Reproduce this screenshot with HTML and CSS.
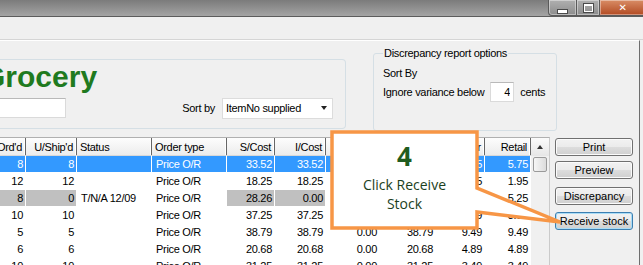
FILE: index.html
```html
<!DOCTYPE html>
<html lang="en">
<head>
  <meta charset="UTF-8">
  <title>Receive Stock</title>
  <link rel="stylesheet" href="styles.css">
</head>
<body>
<div class="titlebar">
  <div class="caption">
    <span class="cap cap-min"><i></i></span>
    <span class="cap cap-max"><i></i></span>
    <span class="cap cap-close">✕</span>
  </div>
</div>
<div class="toolbar"></div>

<div class="client">
  <div class="top">
    <div class="supplier">
      <div class="supplier-name">Grocery</div>
      <div class="supplier-row">
        <input class="textbox code" type="text">
        <span class="sort-label">Sort by</span>
        <div class="combo">ItemNo supplied<span class="combo-arrow"></span></div>
      </div>
    </div>

    <fieldset class="disc">
      <legend>Discrepancy report options</legend>
      <div class="disc-line">Sort By</div>
      <div class="disc-row">
        <span>Ignore variance below</span>
        <input class="textbox cents" type="text" value="4">
        <span>cents</span>
      </div>
    </fieldset>
  </div>

  <div class="bottom">
    <div class="grid">
      <div class="cols">
        <div class="row head">
          <div>Ord'd</div><div>U/Ship'd</div><div class="l">Status</div><div class="l">Order type</div>
          <div>S/Cost</div><div>I/Cost</div><div>Disc</div><div>Nett</div><div>Unit Pr</div><div>Retail</div>
        </div>
        <div class="row sel">
          <div>8</div><div>8</div><div class="l"></div><div class="l">Price O/R</div>
          <div>33.52</div><div>33.52</div><div>0.00</div><div>33.52</div><div>5.75</div><div>5.75</div>
        </div>
        <div class="row">
          <div>12</div><div>12</div><div class="l"></div><div class="l">Price O/R</div>
          <div>18.25</div><div>18.25</div><div>0.00</div><div>18.25</div><div>1.95</div><div>1.95</div>
        </div>
        <div class="row">
          <div class="g">8</div><div class="g">0</div><div class="l">T/N/A 12/09</div><div class="l">Price O/R</div>
          <div class="g">28.26</div><div class="g">0.00</div><div>0.00</div><div>0.00</div><div>5.25</div><div>5.25</div>
        </div>
        <div class="row">
          <div>10</div><div>10</div><div class="l"></div><div class="l">Price O/R</div>
          <div>37.25</div><div>37.25</div><div>0.00</div><div>37.25</div><div>3.99</div><div>3.99</div>
        </div>
        <div class="row">
          <div>5</div><div>5</div><div class="l"></div><div class="l">Price O/R</div>
          <div>38.79</div><div>38.79</div><div>0.00</div><div>38.79</div><div>9.49</div><div>9.49</div>
        </div>
        <div class="row">
          <div>6</div><div>6</div><div class="l"></div><div class="l">Price O/R</div>
          <div>20.68</div><div>20.68</div><div>0.00</div><div>20.68</div><div>4.89</div><div>4.89</div>
        </div>
        <div class="row">
          <div>10</div><div>10</div><div class="l"></div><div class="l">Price O/R</div>
          <div>31.25</div><div>31.25</div><div>0.00</div><div>31.25</div><div>3.49</div><div>3.49</div>
        </div>
      </div>
      <div class="vscroll">
        <div class="scroll-up"><span></span></div>
        <div class="thumb"></div>
      </div>
    </div>

    <div class="buttons">
      <button class="btn print">Print</button>
      <button class="btn preview">Preview</button>
      <button class="btn discrepancy">Discrepancy</button>
      <button class="btn receive">Receive stock</button>
    </div>
  </div>
</div>

<div class="callout">
  <svg width="235" height="102" viewBox="0 0 235 102">
    <path d="M2,2 H147 V58 L230,92 L147,82 V98 H2 Z" fill="#fff" stroke="#f79646" stroke-width="3.5" stroke-linejoin="miter"/>
  </svg>
  <div class="callout-text">
    <div class="callout-num">4</div>
    <div class="callout-msg">Click Receive<br>Stock</div>
  </div>
</div>
</body>
</html>
```

FILE: styles.css
```css
* {
  box-sizing: border-box;
}

body {
  margin: 0;
  width: 643px;
  height: 265px;
  overflow: hidden;
  position: relative;
  background: #f0f0f0;
  color: #000;
  font: 11px "Liberation Sans", Arial, sans-serif;
  letter-spacing: -0.3px;
}

/* window chrome */
.titlebar {
  height: 17px;
  background: linear-gradient(#7b7b7b, #a4a4a4);
  border-bottom: 1px solid #5c5c5c;
  display: flex;
  justify-content: flex-end;
}

.caption {
  display: flex;
  margin-right: -3px;
}

.cap {
  height: 16px;
  border: 1px solid #5a5a5a;
  border-top: none;
  display: flex;
  align-items: center;
  justify-content: center;
  background: linear-gradient(#b0b0b0, #8c8c8c);
  box-shadow: inset 0 0 0 1px rgba(255, 255, 255, 0.4);
}

.cap-min { width: 29px; border-radius: 0 0 0 4px; }
.cap-max { width: 23px; border-left: none; }
.cap-close {
  width: 46px;
  border-left: none;
  border-radius: 0 0 4px 0;
  background: linear-gradient(#d98d66, #b24a22);
  color: #fff;
  font: bold 10px "DejaVu Sans", sans-serif;
}

.cap-min i {
  width: 9px;
  height: 3px;
  margin-top: 7px;
  background: #fff;
  box-shadow: 0 0 0 1px #4a4a4a;
}

.cap-max i {
  width: 9px;
  height: 8px;
  border: 1px solid #fff;
  border-top-width: 2px;
  box-shadow: 0 0 0 1px #4a4a4a;
}

.toolbar {
  height: 23px;
  border-bottom: 1px solid #d5d5d5;
}

.client {
  width: 640px;
  height: 225px;
  border-top: 1px solid #fff;
  border-right: 1px solid #6e6e6e;
}

/* top options */
.top {
  display: flex;
  align-items: flex-start;
  height: 96px;
}

.supplier {
  width: 346px;
  height: 70px;
  margin-top: 18px;
  padding-top: 1px;
  border: 1px solid #d5dfe5;
  border-left: none;
  border-radius: 0 4px 4px 0;
}

.supplier-name {
  margin-left: -18px;
  font-size: 30px;
  font-weight: bold;
  line-height: 32px;
  letter-spacing: 0;
  color: #1f7a1f;
}

.supplier-row {
  display: flex;
  align-items: center;
  height: 20px;
  margin-top: 5px;
}

.textbox {
  height: 20px;
  margin: 0;
  padding: 0 3px;
  font: inherit;
  background: #fff;
  border: 1px solid #dadada;
  border-top-color: #b9b9b9;
}

.textbox.code {
  width: 66px;
  border-left: none;
}

.sort-label {
  margin-left: auto;
  margin-right: 7px;
}

.combo {
  width: 111px;
  height: 21px;
  margin-right: 12px;
  padding-left: 3px;
  display: flex;
  align-items: center;
  background: #fff;
  border: 1px solid #dcdcdc;
}

.combo-arrow {
  margin-left: auto;
  margin-right: 5px;
  border-left: 3.5px solid transparent;
  border-right: 3.5px solid transparent;
  border-top: 4px solid #222;
}

.disc {
  width: 184px;
  height: 84px;
  margin: 6px 0 0 27px;
  padding: 0 9px;
  border: 1px solid #d5dfe5;
  border-radius: 3px;
}

.disc legend {
  padding: 0 1px;
  line-height: 13px;
}

.disc-line {
  margin-top: 7px;
  line-height: 13px;
}

.disc-row {
  display: flex;
  align-items: center;
  height: 20px;
  margin-top: 2px;
}

.textbox.cents {
  width: 24px;
  margin: 0 6px;
  text-align: right;
}

/* stock grid */
.bottom {
  display: flex;
}

.grid {
  width: 550px;
  height: 129px;
  display: flex;
  background: #fff;
  border-top: 1px solid #b0b0b0;
  border-right: 1px solid #cacaca;
}

.cols {
  width: 531px;
}

.row {
  display: flex;
  height: 17px;
}

.row > div {
  display: flex;
  align-items: center;
  justify-content: flex-end;
  padding-right: 2px;
  white-space: nowrap;
  overflow: hidden;
  border-right: 1px solid #fff;
  border-bottom: 1px solid #fff;
}

.row > div:nth-child(1) { width: 26px; }
.row > div:nth-child(2) { width: 51px; }
.row > div:nth-child(3) { width: 75px; }
.row > div:nth-child(4) { width: 75px; }
.row > div:nth-child(5) { width: 48px; }
.row > div:nth-child(6) { width: 51px; }
.row > div:nth-child(7) { width: 54px; }
.row > div:nth-child(8) { width: 56px; }
.row > div:nth-child(9) { width: 49px; }
.row > div:nth-child(10) { width: 46px; }

.row > .l {
  justify-content: flex-start;
  padding-left: 4px;
}

.row > .g {
  background: #c0c0c0;
}

.row.sel > div {
  background: #3399ff;
  color: #fff;
}

.row.head {
  height: 18px;
  background: linear-gradient(#fdfdfd, #ececec);
  border-bottom: 1px solid #d8d8d8;
}

.row.head > div {
  border-bottom: none;
  border-right: 1px solid #666;
  box-shadow: inset -1px 0 #fff;
  padding-right: 3px;
}

.row.head > .l {
  padding-left: 3px;
}

.vscroll {
  width: 18px;
  background: #f0f0f0;
}

.scroll-up {
  height: 18px;
  display: flex;
  align-items: center;
  justify-content: center;
  background: linear-gradient(#fbfbfb, #e6e6e6);
}

.scroll-up span {
  border-left: 3.5px solid transparent;
  border-right: 3.5px solid transparent;
  border-bottom: 4px solid #333;
}

.thumb {
  width: 14px;
  height: 15px;
  margin: 1px 0 0 2px;
  border: 1px solid #9a9a9a;
  border-radius: 2px;
  background: linear-gradient(90deg, #f6f6f6, #dcdcdc);
}

/* action buttons */
.buttons {
  display: flex;
  flex-direction: column;
  padding-left: 5px;
}

.btn {
  width: 78px;
  height: 18px;
  margin: 0;
  padding: 0;
  font: inherit;
  color: #000;
  border: 1px solid #707070;
  border-radius: 3px;
  background: linear-gradient(#f2f2f2, #ebebeb 50%, #dddddd 50%, #cfcfcf);
  box-shadow: inset 0 0 0 1px #fbfbfb;
}

.btn.print { margin-top: 1px; }
.btn.preview { margin-top: 5px; }
.btn.discrepancy { margin-top: 8px; }
.btn.receive {
  margin-top: 7px;
  border-color: #3c7fb1;
  box-shadow: inset 0 0 0 1px #a9dcf6;
}

/* tutorial callout */
.callout {
  position: absolute;
  left: 330px;
  top: 130px;
  width: 235px;
  height: 102px;
}

.callout svg {
  position: absolute;
  left: 0;
  top: 0;
}

.callout-text {
  position: relative;
  width: 149px;
  padding-top: 11px;
  text-align: center;
  font-family: "Open Sans", sans-serif;
  letter-spacing: 0;
  color: #1b3f1d;
}

.callout-num {
  font-size: 26px;
  font-weight: bold;
  line-height: 30px;
  color: #1f5c20;
}

.callout-msg {
  margin-top: 4px;
  font-size: 14px;
  line-height: 19px;
}
```
